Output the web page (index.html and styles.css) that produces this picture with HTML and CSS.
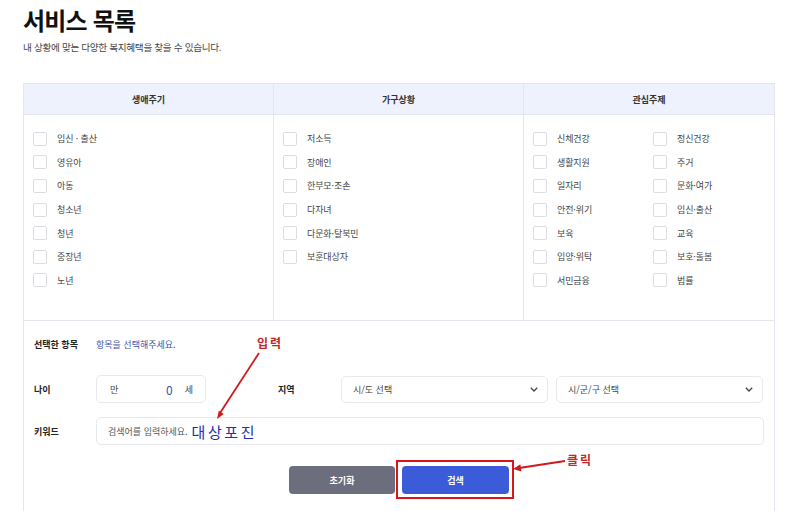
FILE: index.html
```html
<!DOCTYPE html>
<html lang="ko">
<head>
<meta charset="utf-8">
<title>서비스 목록</title>
<link rel="stylesheet" href="styles.css">
</head>
<body>
<div class="page">
  <h1 class="title">서비스 목록</h1>
  <p class="desc">내 상황에 맞는 다양한 복지혜택을 찾을 수 있습니다.</p>

  <div class="panel">
    <div class="cats">
      <div class="col">
        <div class="col-head">생애주기</div>
        <ul class="opts">
          <li class="opt"><span class="box"></span>임신 · 출산</li>
          <li class="opt"><span class="box"></span>영유아</li>
          <li class="opt"><span class="box"></span>아동</li>
          <li class="opt"><span class="box"></span>청소년</li>
          <li class="opt"><span class="box"></span>청년</li>
          <li class="opt"><span class="box"></span>중장년</li>
          <li class="opt"><span class="box"></span>노년</li>
        </ul>
      </div>
      <div class="col">
        <div class="col-head">가구상황</div>
        <ul class="opts">
          <li class="opt"><span class="box"></span>저소득</li>
          <li class="opt"><span class="box"></span>장애인</li>
          <li class="opt"><span class="box"></span>한부모·조손</li>
          <li class="opt"><span class="box"></span>다자녀</li>
          <li class="opt"><span class="box"></span>다문화·탈북민</li>
          <li class="opt"><span class="box"></span>보훈대상자</li>
        </ul>
      </div>
      <div class="col">
        <div class="col-head">관심주제</div>
        <ul class="opts two">
          <li class="opt"><span class="box"></span>신체건강</li>
          <li class="opt"><span class="box"></span>정신건강</li>
          <li class="opt"><span class="box"></span>생활지원</li>
          <li class="opt"><span class="box"></span>주거</li>
          <li class="opt"><span class="box"></span>일자리</li>
          <li class="opt"><span class="box"></span>문화·여가</li>
          <li class="opt"><span class="box"></span>안전·위기</li>
          <li class="opt"><span class="box"></span>임신·출산</li>
          <li class="opt"><span class="box"></span>보육</li>
          <li class="opt"><span class="box"></span>교육</li>
          <li class="opt"><span class="box"></span>입양·위탁</li>
          <li class="opt"><span class="box"></span>보호·돌봄</li>
          <li class="opt"><span class="box"></span>서민금융</li>
          <li class="opt"><span class="box"></span>법률</li>
        </ul>
      </div>
    </div>

    <div class="search">
      <div class="row row-sel">
        <span class="lbl">선택한 항목</span>
        <span class="hint">항목을 선택해주세요.</span>
      </div>
      <div class="row row-age">
        <span class="lbl">나이</span>
        <div class="field age">
          <span>만</span>
          <span class="age-num">0</span>
          <span>세</span>
        </div>
        <span class="lbl lbl-region">지역</span>
        <div class="selects">
          <div class="field select"><span>시/도 선택</span><svg class="chev" viewBox="0 0 8 5" width="8" height="5"><path d="M0.8 0.8 L4 4 L7.2 0.8" fill="none" stroke="#444" stroke-width="1.3"/></svg></div>
          <div class="field select"><span>시/군/구 선택</span><svg class="chev" viewBox="0 0 8 5" width="8" height="5"><path d="M0.8 0.8 L4 4 L7.2 0.8" fill="none" stroke="#444" stroke-width="1.3"/></svg></div>
        </div>
      </div>
      <div class="row row-key">
        <span class="lbl">키워드</span>
        <div class="field keyword">
          <span class="ph">검색어를 입력하세요.</span>
          <span class="typed">대상포진</span>
        </div>
      </div>
      <div class="btns">
        <button class="btn btn-reset">초기화</button>
        <button class="btn btn-search">검색</button>
      </div>
    </div>
  </div>

  <svg class="annot" width="800" height="511" viewBox="0 0 800 511">
    <text x="257" y="348" class="annot-text">입력</text>
    <line x1="259" y1="353" x2="220" y2="413" stroke="#d01a1e" stroke-width="1.8"/>
    <polygon points="217,419 223.8,413.9 218.8,410.7" fill="#d01a1e"/>
    <text x="567" y="465" class="annot-text">클릭</text>
    <line x1="565" y1="461" x2="519" y2="468" stroke="#d01a1e" stroke-width="2"/>
    <polygon points="513,469 521.4,471.5 520.4,464.3" fill="#d01a1e"/>
  </svg>
</div>
</body>
</html>
```

FILE: styles.css
```css
* { box-sizing: border-box; }
html, body { margin: 0; padding: 0; background: #fff; }
body {
  font-family: "Noto Sans CJK KR", "Noto Sans", sans-serif;
  color: #333;
  width: 800px;
  height: 511px;
  overflow: hidden;
}
.page {
  position: relative;
  width: 800px;
  height: 511px;
  padding: 5px 0 0 23px;
}
.title {
  margin: 0;
  font-size: 24px;
  line-height: 30px;
  font-weight: 700;
  letter-spacing: -0.8px;
  color: #111;
}
.desc {
  margin: 5px 0 0;
  font-size: 9.6px;
  line-height: 14px;
  letter-spacing: -0.3px;
  color: #444;
}
.panel {
  margin-top: 29px;
  width: 752px;
  border: 1px solid #e3e6ee;
  border-bottom: none;
  height: 440px;
}
.cats {
  display: grid;
  grid-template-columns: 250px 1fr 1fr;
}
.col { border-right: 1px solid #e3e6ee; }
.col:last-child { border-right: none; }
.col-head {
  height: 31px;
  background: #eef2fc;
  border-bottom: 1px solid #e3e6ee;
  display: flex;
  align-items: center;
  justify-content: center;
  font-size: 9px;
  font-weight: 700;
  color: #333;
}
.opts {
  list-style: none;
  margin: 0;
  padding: 12px 0 28px 9px;
}
.opts.two {
  display: grid;
  grid-template-columns: 120px 1fr;
}
.opt {
  height: 23.6px;
  display: flex;
  align-items: center;
  font-size: 9px;
  color: #444;
  letter-spacing: -0.1px;
}
.box {
  width: 14px;
  height: 14px;
  border: 1px solid #dcdde2;
  border-radius: 2px;
  margin-right: 10px;
  flex: none;
  background: #fff;
}
.search {
  border-top: 1px solid #e3e6ee;
  padding: 13px 10px 0 10px;
}
.row {
  display: flex;
  align-items: center;
}
.row-sel { height: 20px; }
.row-age { margin-top: 21px; height: 28px; }
.row-key { margin-top: 14px; height: 28px; }
.lbl {
  width: 62px;
  flex: none;
  font-size: 9px;
  font-weight: 700;
  color: #222;
}
.lbl-region { margin-left: 72px; width: 63px; }
.hint {
  font-size: 9px;
  color: #3b53a8;
}
.field {
  height: 28px;
  border: 1px solid #e8e9ee;
  border-radius: 5px;
  display: flex;
  align-items: center;
  font-size: 9px;
  color: #444;
  background: #fff;
}
.age {
  width: 110px;
  padding: 0 12px 0 13px;
}
.age-num {
  margin-left: auto;
  margin-right: 12px;
  font-size: 12px;
  color: #3b53a8;
}
.selects {
  flex: 1;
  display: flex;
  gap: 8px;
  margin-right: 1px;
}
.select {
  flex: 1;
  height: 27px;
  justify-content: space-between;
  padding: 0 9px 0 11px;
}
.keyword {
  flex: 1;
  padding-left: 11px;
}
.ph { color: #555; margin-right: 4px; }
.typed {
  font-size: 15px;
  letter-spacing: 2.6px;
  color: #1e2fb0;
}
.btns {
  margin-top: 21px;
  display: flex;
  justify-content: center;
  gap: 7px;
}
.btn {
  height: 28px;
  border: none;
  border-radius: 4px;
  font-family: inherit;
  font-size: 9px;
  font-weight: 700;
  color: #fff;
  padding: 0;
}
.btn-reset { width: 106px; background: #6c6e7e; }
.btn-search {
  position: relative;
  width: 107px;
  background: #3b5bd9;
}
.btn-search::after {
  content: "";
  position: absolute;
  top: -6px;
  left: -6px;
  right: -5px;
  bottom: -5px;
  border: 2px solid #d8171c;
}
.annot {
  position: absolute;
  left: 0;
  top: 0;
  pointer-events: none;
}
.annot-text {
  font-family: "Noto Sans CJK KR", sans-serif;
  font-size: 12px;
  font-weight: 700;
  letter-spacing: 2px;
  fill: #c4262a;
}
```
